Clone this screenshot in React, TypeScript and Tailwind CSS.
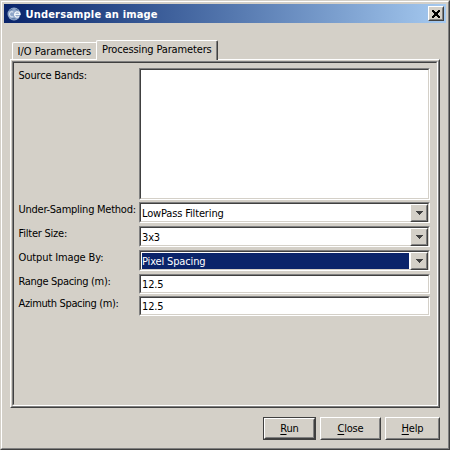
import type { ReactNode } from "react";

const sunken =
  "border border-t-[#808080] border-l-[#808080] border-r-white border-b-white";
const sunkenInner =
  "border border-t-[#404040] border-l-[#404040] border-r-[#d4d0c8] border-b-[#d4d0c8] bg-white";
const raised =
  "border border-t-white border-l-white border-r-[#404040] border-b-[#404040]";
const raisedInner =
  "border border-t-[#d4d0c8] border-l-[#d4d0c8] border-r-[#808080] border-b-[#808080] bg-[#d4d0c8]";

function Row({ label, height, tracking, children }: { label: string; height: string; tracking: string; children: ReactNode }) {
  return (
    <div className={`flex ${height}`}>
      <div className={`w-[125px] shrink-0 pt-px pl-[4.5px] leading-[14px] whitespace-nowrap ${tracking}`}>{label}</div>
      <div className="w-[291px]">{children}</div>
    </div>
  );
}

function Combo({ value, selected = false }: { value: string; selected?: boolean }) {
  return (
    <div className={`h-[21px] ${sunken}`}>
      <div className={`flex h-[19px] ${sunkenInner}`}>
        <div className={`m-px h-[16px] flex-1 leading-[17px] tracking-[-0.15px] ${selected ? "bg-[#0a246a] text-white" : ""}`}>
          {value}
        </div>
        <div className={`h-[18px] w-[18px] ${raised}`}>
          <div className={`flex h-[16px] items-center justify-center ${raisedInner}`}>
            <svg width="7" height="4" viewBox="0 0 7 4" shapeRendering="crispEdges">
              <path d="M0 0h7v1H6v1H5v1H4v1H3V3H2V2H1V1H0z" fill="#404040" />
            </svg>
          </div>
        </div>
      </div>
    </div>
  );
}

function Field({ value }: { value: string }) {
  return (
    <div className={`h-[20px] ${sunken}`}>
      <div className={`h-[18px] pl-px leading-[17px] tracking-[-0.15px] ${sunkenInner}`}>{value}</div>
    </div>
  );
}

function Button({ label, width, primary = false }: { label: string; width: string; primary?: boolean }) {
  return (
    <div className={`h-[23px] ${width} ${primary ? "border border-[#404040]" : ""}`}>
      <div className={`h-full ${raised}`}>
        <div className={`flex h-full items-center justify-center leading-[14px] tracking-[-0.2px] ${raisedInner}`}>
          <span>
            <span className="underline underline-offset-2">{label[0]}</span>
            {label.slice(1)}
          </span>
        </div>
      </div>
    </div>
  );
}

export default function App() {
  return (
    <div className="h-[450px] w-[450px] overflow-hidden border border-t-[#d4d0c8] border-l-[#d4d0c8] border-r-[#404040] border-b-[#404040] bg-[#d4d0c8] font-['DejaVu_Sans_Condensed','DejaVu_Sans',sans-serif] text-[11px] text-black [font-stretch:condensed]">
      <div className="flex h-[448px] flex-col border border-t-white border-l-white border-r-[#808080] border-b-[#808080] px-[2px] pt-[2px]">
        <div className="flex h-[19px] shrink-0 items-center bg-linear-to-r from-[#0a246a] to-[#a6caf0] pr-[2px] pl-[3px]">
          <svg width="14" height="14" viewBox="0 0 14 14">
            <circle cx="7" cy="7" r="6.5" fill="#8fa6c9" />
            <path d="M6.3 5.2a2.5 2.5 0 1 0 0 4.2" fill="none" stroke="#d5e0ee" strokeWidth="1.2" />
            <path d="M7.5 7.3h5.5a2.7 2.7 0 1 0-1 2.3" fill="none" stroke="#f3f7fb" strokeWidth="1.3" />
            <path d="M2.5 3.5l3-1.5M8.5 2.2l2.5 1M4.5 11.8h4" stroke="#54739f" />
          </svg>
          <div className="flex-1 pt-px pl-[4.5px] text-[11px] leading-[15px] font-bold tracking-[0.18px] whitespace-nowrap text-white">
            Undersample an image
          </div>
          <div className={`h-[15px] w-[16px] ${raised}`}>
            <div className={`flex h-full items-center justify-center pr-px ${raisedInner}`}>
              <svg width="8" height="8" viewBox="0 0 8 8" shapeRendering="crispEdges">
                <path d="M0 0h2v1H0zM6 0h2v1H6zM0 1h3v1H0zM5 1h3v1H5zM1 2h6v1H1zM2 3h4v2H2zM1 5h6v1H1zM0 6h3v1H0zM5 6h3v1H5zM0 7h2v1H0zM6 7h2v1H6z" />
              </svg>
            </div>
          </div>
        </div>

        <div className="mt-[17px] flex h-[19px] shrink-0 items-end pl-[8px]">
          <div className="h-[17px] w-[84px] rounded-tl-[2px] border-t border-l border-white pl-[4.5px] leading-[18px] whitespace-nowrap">
            I/O Parameters
          </div>
          <div className="relative z-10 -mb-px h-[20px] w-[122px] rounded-t-[2px] border-t border-r border-l border-t-white border-r-[#404040] border-l-white bg-[#d4d0c8]">
            <div className="h-full border-r border-[#808080] pl-[5px] leading-[18px] tracking-[-0.14px] whitespace-nowrap">
              Processing Parameters
            </div>
          </div>
        </div>

        <div className={`ml-[6px] h-[349px] w-[430px] shrink-0 ${raised}`}>
          <div className={`h-full ${raisedInner}`}>
            <div className={`h-full w-[426px] ${sunken}`}>
              <div className="h-full border border-t-[#404040] border-l-[#404040] border-r-[#d4d0c8] border-b-[#d4d0c8] pt-[5px]">
                <Row label="Source Bands:" height="h-[134px]" tracking="tracking-[-0.2px]">
                  <div className={`h-[132px] ${sunken}`}>
                    <div className={`h-full ${sunkenInner}`} />
                  </div>
                </Row>
                <Row label="Under-Sampling Method:" height="h-[24px]" tracking="tracking-[-0.25px]"><Combo value="LowPass Filtering" /></Row>
                <Row label="Filter Size:" height="h-[24px]" tracking="tracking-[-0.22px]"><Combo value="3x3" /></Row>
                <Row label="Output Image By:" height="h-[24px]" tracking="tracking-[-0.12px]"><Combo value="Pixel Spacing" selected /></Row>
                <Row label="Range Spacing (m):" height="h-[22px]" tracking="tracking-[-0.32px]"><Field value="12.5" /></Row>
                <Row label="Azimuth Spacing (m):" height="h-[22px]" tracking="tracking-[-0.36px]"><Field value="12.5" /></Row>
              </div>
            </div>
          </div>
        </div>

        <div className="mt-[9px] flex justify-end gap-[4px] pr-[6px]">
          <Button label="Run" width="w-[53px]" primary />
          <Button label="Close" width="w-[61px]" />
          <Button label="Help" width="w-[55px]" />
        </div>
      </div>
    </div>
  );
}
